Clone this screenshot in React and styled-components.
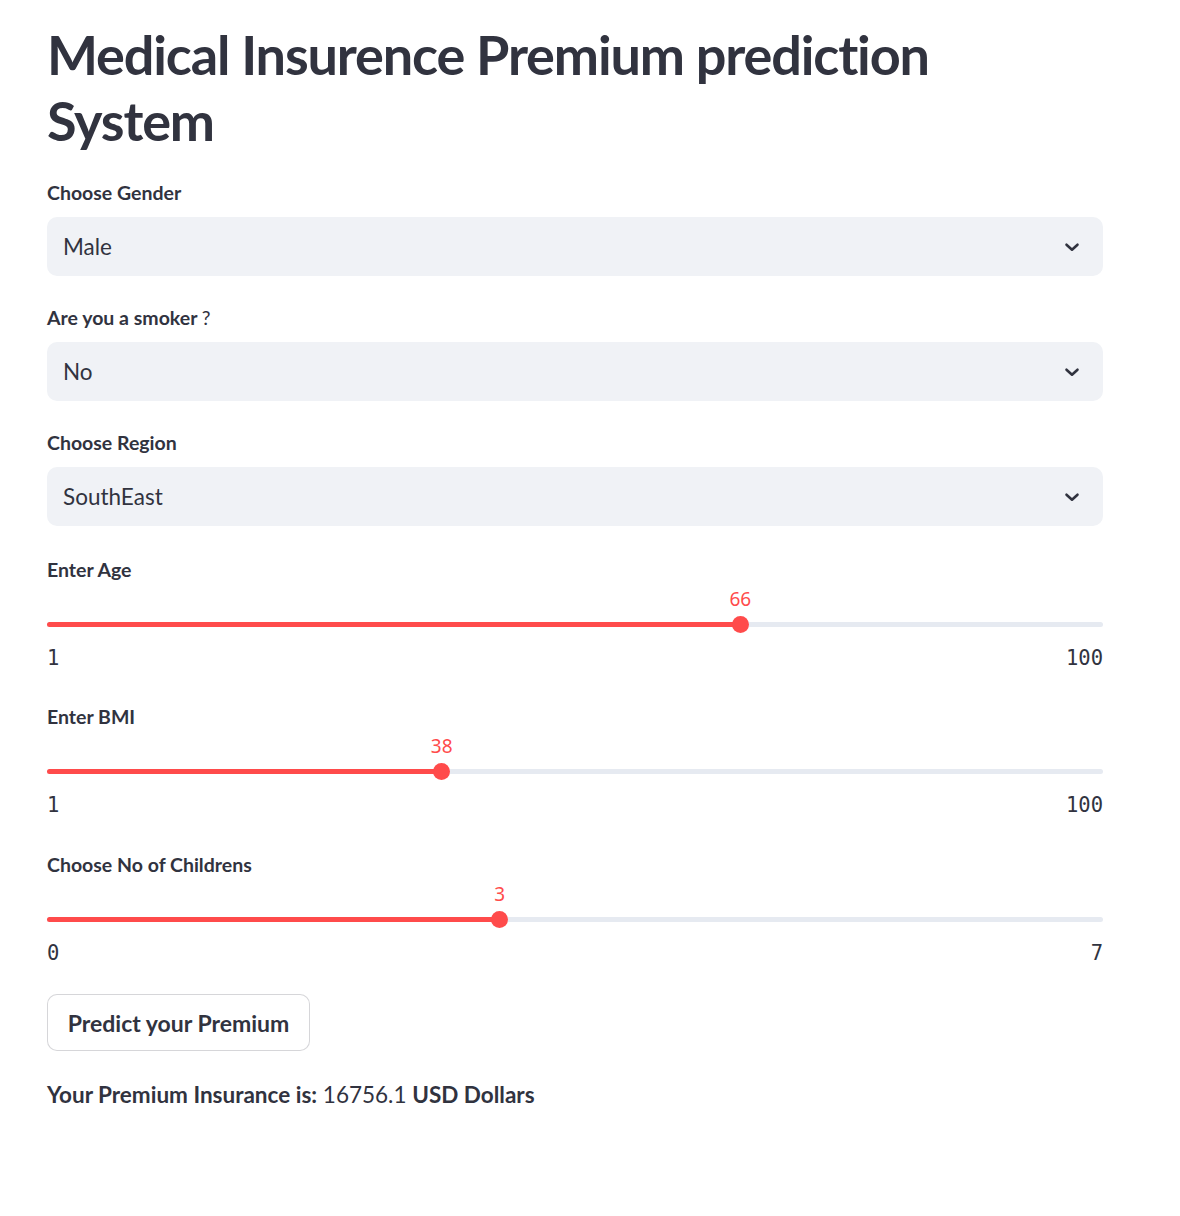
import React from 'react';
import styled, { createGlobalStyle } from 'styled-components';

const GlobalStyle = createGlobalStyle`
  html, body { margin: 0; padding: 0; background: #ffffff; }
  body { font-family: 'Lato', 'Noto Sans', sans-serif; color: #31333F; }
`;

// --- Layout ---
const Page = styled.div`
  width: 1056px;
  padding: 22px 0 60px 47px;
  display: flex;
  flex-direction: column;
`;

const Title = styled.h1`
  margin: 0 0 28px;
  font-size: 54px;
  line-height: 66px;
  font-weight: 700;
  color: #31333F;
  letter-spacing: -1.15px;
`;

const Widget = styled.div`
  display: flex;
  flex-direction: column;
  margin-bottom: ${p => p.$gap ?? 31}px;
`;

const Label = styled.div`
  font-size: 19.5px;
  line-height: 22px;
  font-weight: 700;
  color: #31333F;
  margin-bottom: ${p => p.$gap ?? 13}px;

  span { font-weight: 400; }
`;

/* select */
const SelectBox = styled.div`
  height: 59px;
  background: #F0F2F6;
  border-radius: 10px;
  display: flex;
  align-items: center;
  justify-content: space-between;
  padding: 0 20px 0 16px;
  box-sizing: border-box;
  font-size: 22.5px;
  color: #31333F;
`;

/* slider */
const SliderArea = styled.div`
  position: relative;
  height: 57px;
`;

const Track = styled.div`
  position: absolute;
  left: 0;
  right: 0;
  top: 41px;
  height: 5px;
  border-radius: 3px;
  background: #E6EAF1;
`;

const TrackFill = styled.div`
  height: 100%;
  border-radius: 3px;
  background: #FF4B4B;
`;

const Thumb = styled.div`
  position: absolute;
  top: 35px;
  width: 17px;
  height: 17px;
  margin-left: -8.5px;
  border-radius: 50%;
  background: #FF4B4B;
`;

const ThumbValue = styled.div`
  position: absolute;
  top: 8px;
  transform: translateX(-50%);
  font-family: 'Noto Sans', sans-serif;
  font-size: 19px;
  line-height: 20px;
  font-weight: 400;
  color: #FF4B4B;
`;

const TickRow = styled.div`
  display: flex;
  justify-content: space-between;
  margin-top: 10px;
  font-family: 'DejaVu Sans Mono', monospace;
  font-size: 20.5px;
  line-height: 20px;
  color: #31333F;
`;

const Button = styled.button`
  align-self: flex-start;
  width: 263px;
  height: 57px;
  padding: 0;
  background: #ffffff;
  border: 1px solid rgba(49, 51, 63, 0.2);
  border-radius: 10px;
  font-family: inherit;
  font-size: 23px;
  font-weight: 700;
  color: #31333F;
  cursor: pointer;
  margin-bottom: 28px;
`;

const Result = styled.p`
  margin: 0;
  font-size: 22.5px;
  line-height: 32px;
  color: #31333F;
  b { font-weight: 700; }
`;

const Chevron = () => (
  <svg width="22" height="22" viewBox="0 0 24 24" fill="none" stroke="#31333F" strokeWidth="2.8" strokeLinecap="round" strokeLinejoin="round">
    <polyline points="6 9.5 12 15 18 9.5" />
  </svg>
);

const Select = ({ label, value, gap }) => (
  <Widget $gap={gap}>
    <Label>{label}</Label>
    <SelectBox>
      <span>{value}</span>
      <Chevron />
    </SelectBox>
  </Widget>
);

const Slider = ({ label, min, max, value, gap = 38 }) => {
  const pct = ((value - min) / (max - min)) * 100;
  return (
    <Widget $gap={gap}>
      <Label $gap={0}>{label}</Label>
      <SliderArea>
        <Track>
          <TrackFill style={{ width: `${pct}%` }} />
        </Track>
        <Thumb style={{ left: `${pct}%` }} />
        <ThumbValue style={{ left: `${pct}%` }}>{value}</ThumbValue>
      </SliderArea>
      <TickRow>
        <span>{min}</span>
        <span>{max}</span>
      </TickRow>
    </Widget>
  );
};

const App = () => (
  <>
    <GlobalStyle />
    <Page>
      <Title>Medical Insurence Premium prediction System</Title>
      <Select label="Choose Gender" value="Male" />
      <Select label={<>Are you a smoker <span>?</span></>} value="No" />
      <Select label="Choose Region" value="SouthEast" gap={33} />
      <Slider label="Enter Age" min={1} max={100} value={66} />
      <Slider label="Enter BMI" min={1} max={100} value={38} gap={39} />
      <Slider label="Choose No of Childrens" min={0} max={7} value={3} gap={31} />
      <Button>Predict your Premium</Button>
      <Result>
        <b>Your Premium Insurance is:</b> 16756.1 <b>USD Dollars</b>
      </Result>
    </Page>
  </>
);

export default App;
